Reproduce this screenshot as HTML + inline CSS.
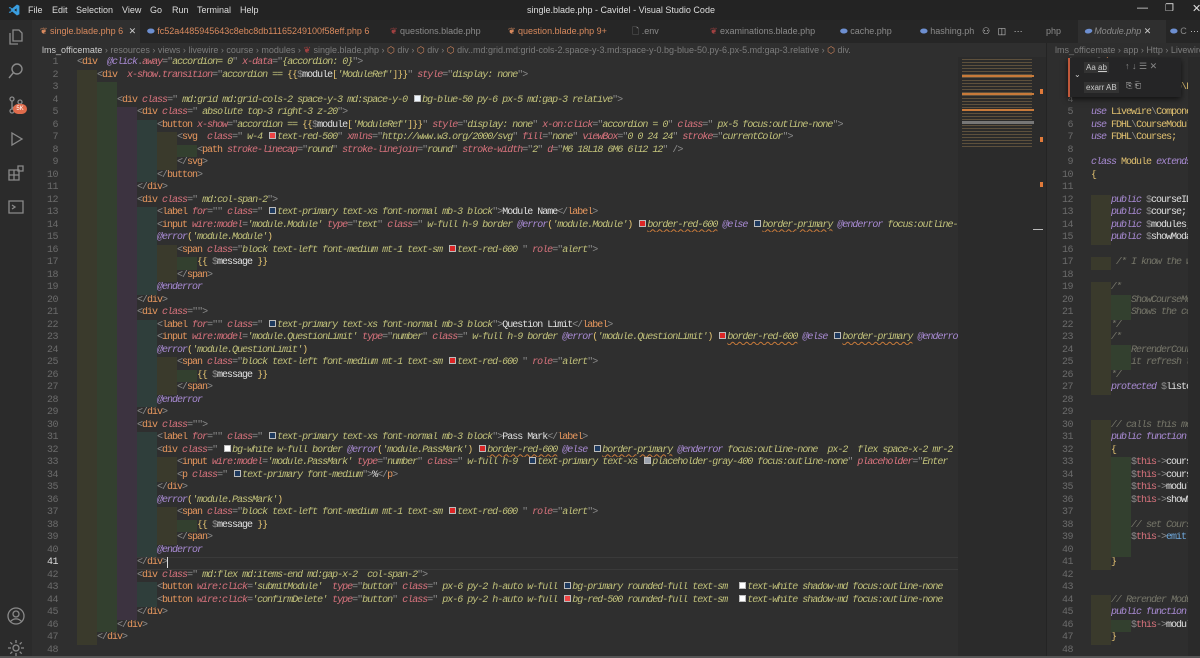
<!DOCTYPE html>
<html><head><meta charset="utf-8"><style>
*{margin:0;padding:0;box-sizing:border-box}
body{width:1200px;height:658px;overflow:hidden;background:#2f2f2f;font-family:"Liberation Sans",sans-serif;position:relative}
.abs{position:absolute}
#title{left:0;top:0;width:1200px;height:20px;background:#232323;color:#ddd;font-size:9px}
#title span{position:absolute;top:5px}
#act{left:0;top:20px;width:32px;height:638px;background:#2b2b2b}
#tabs{left:32px;top:20px;width:1168px;height:23px;background:#262626;font-size:9px;color:#8a8a8a}
.tab{position:absolute;top:0;height:23px;line-height:23px;white-space:nowrap}
.tab.or{color:#d98a5e}
#bc{left:32px;top:43px;width:1014px;height:14px;font-size:9px;color:#7c7c7c;line-height:14px;white-space:nowrap;background:#2f2f2f}
#ed{left:32px;top:57px;width:926px;height:601px;overflow:hidden}
.mono{font-family:"Liberation Mono",monospace;font-size:10px;letter-spacing:-1px;line-height:12.5px}
.ln{position:absolute;width:26px;text-align:right;color:#6b6b6b;letter-spacing:-0.5px}
.code{white-space:normal}
.code>div{height:12.5px;overflow:hidden;white-space:pre}
.code i.g{display:inline-block;width:20px;height:12.5px;vertical-align:top}
.g1{background:#3a3a2c}.g2{background:#33402f}.g3{background:#3c3340}.g4{background:#2f3e3b}.g5{background:#3a3a2c}.g6{background:#33402f}
.k{color:#8c8c8c}.t{color:#e6975e}.a{color:#d8737d;font-style:italic}.s{color:#c2c27b;font-style:italic}.d{color:#a98bd4;font-style:italic}.x{color:#e0e0e0}.c{color:#77776a;font-style:italic}.v{color:#d8737d}.b{color:#e0c070}.u{text-decoration:underline wavy #c87a3a;text-underline-offset:2px}
.q{display:inline-block;width:7px;height:7px;border:1px solid #bbb;margin:0 1px 0 2px;vertical-align:-0px}
#mini{left:958px;top:57px;width:88px;height:601px;background:#2b2b2b}
#right{left:1046px;top:43px;width:154px;height:615px;background:#2e2e2e;border-left:1px solid #242424}
</style></head><body>

<div id="title" class="abs">
<svg class="abs" style="left:8px;top:4px" width="12" height="12" viewBox="0 0 12 12"><path d="M9 1 L11 2 V10 L9 11 L3 6 Z M9 3.5 L5.5 6 L9 8.5 Z M1 4 L2 3.5 L4 5 M1 8 L2 8.5 L4 7" fill="#3a9ee0" stroke="#3a9ee0" stroke-width="0.8"/></svg>
<span style="left:28px">File</span><span style="left:52px">Edit</span><span style="left:76px">Selection</span><span style="left:122px">View</span><span style="left:150px">Go</span><span style="left:172px">Run</span><span style="left:197px">Terminal</span><span style="left:240px">Help</span>
<span style="left:527px">single.blade.php - Cavidel - Visual Studio Code</span>
<span style="left:1137px;top:2px;font-size:11px">—</span><span style="left:1165px;top:3px;font-size:10px">❐</span><span style="left:1192px;top:2px;font-size:11px">✕</span>
</div>

<div id="act" class="abs">
<svg class="abs" style="left:7px;top:8px" width="18" height="18" viewBox="0 0 18 18" fill="none" stroke="#8a8a8a" stroke-width="1.3"><path d="M6 2h6l3 3v8H6z M3 5v11h8"/></svg>
<svg class="abs" style="left:7px;top:42px" width="18" height="18" viewBox="0 0 18 18" fill="none" stroke="#8a8a8a" stroke-width="1.4"><circle cx="10" cy="7" r="5"/><path d="M6.5 10.5L2 16"/></svg>
<svg class="abs" style="left:7px;top:76px" width="18" height="18" viewBox="0 0 18 18" fill="none" stroke="#8a8a8a" stroke-width="1.3"><circle cx="5" cy="3" r="2"/><circle cx="5" cy="15" r="2"/><circle cx="13" cy="6" r="2"/><path d="M5 5v8M13 8c0 3-8 2-8 5"/></svg>
<div class="abs" style="left:13px;top:84px;width:14px;height:10px;border-radius:5px;background:#e06c4c;color:#fff;font-size:6px;text-align:center;line-height:10px">5K</div>
<svg class="abs" style="left:7px;top:110px" width="18" height="18" viewBox="0 0 18 18" fill="none" stroke="#8a8a8a" stroke-width="1.3"><path d="M5 3l10 6-10 6z"/></svg>
<svg class="abs" style="left:7px;top:144px" width="18" height="18" viewBox="0 0 18 18" fill="none" stroke="#8a8a8a" stroke-width="1.3"><path d="M2 6h5v5H2zM7 6h5v5H7zM2 11h5v5H2zM7 11h5v5H7zM11 2h5v5h-5z"/></svg>
<svg class="abs" style="left:7px;top:178px" width="18" height="18" viewBox="0 0 18 18" fill="none" stroke="#8a8a8a" stroke-width="1.3"><path d="M2 3h14v12H2z M5 7l3 2-3 2"/></svg>
<svg class="abs" style="left:6px;top:586px" width="20" height="20" viewBox="0 0 20 20" fill="none" stroke="#8a8a8a" stroke-width="1.3"><circle cx="10" cy="10" r="8"/><circle cx="10" cy="8" r="3"/><path d="M4.5 15.5c3-3.5 8-3.5 11 0"/></svg>
<svg class="abs" style="left:6px;top:618px" width="20" height="20" viewBox="0 0 20 20" fill="none" stroke="#8a8a8a" stroke-width="1.3"><circle cx="10" cy="10" r="3"/><path d="M10 2v3M10 15v3M2 10h3M15 10h3M4.3 4.3l2 2M13.7 13.7l2 2M4.3 15.7l2-2M13.7 6.3l2-2"/></svg>
</div>

<div id="tabs" class="abs">
<div class="tab or" style="left:0;width:108px;background:#2f2f2f;padding-left:8px">❦ single.blade.php 6 <span style="color:#ccc;margin-left:3px">✕</span></div>
<div class="tab or" style="left:115px"><span style="color:#6d8fd0">⬬</span> fc52a4485945643c8ebc8db11165249100f58eff.php 6</div>
<div class="tab" style="left:358px"><span style="color:#a04040">❦</span> questions.blade.php</div>
<div class="tab or" style="left:476px">❦ question.blade.php 9+</div>
<div class="tab" style="left:600px">🗋 .env</div>
<div class="tab" style="left:678px"><span style="color:#a04040">❦</span> examinations.blade.php</div>
<div class="tab" style="left:808px"><span style="color:#6d8fd0">⬬</span> cache.php</div>
<div class="tab" style="left:888px"><span style="color:#6d8fd0">⬬</span> hashing.ph</div>
<div class="tab" style="left:950px;color:#ccc">⚇ &nbsp; ◫ &nbsp; ···</div>
<div class="tab" style="left:1014px">php</div>
<div class="tab" style="left:1046px;width:88px;background:#2f2f2f;padding-left:6px;font-style:italic"><span style="color:#6d8fd0">⬬</span> Module.php <span style="color:#ccc;font-style:normal">✕</span></div>
<div class="tab" style="left:1138px"><span style="color:#6d8fd0">⬬</span> C</div>
<div class="tab" style="left:1158px;color:#ccc">···</div>
</div>

<div id="bc" class="abs"><span style="color:#ccc;margin-left:10px">lms_officemate</span> › resources › views › livewire › course › modules › <span style="color:#a04040">❦</span> single.blade.php › <span style="color:#d98a5e">⬡</span> div › <span style="color:#d98a5e">⬡</span> div › <span style="color:#d98a5e">⬡</span> div..md:grid.md:grid-cols-2.space-y-3.md:space-y-0.bg-blue-50.py-6.px-5.md:gap-3.relative › <span style="color:#d98a5e">⬡</span> div.</div>

<div id="ed" class="abs mono">
<div class="ln" style="left:0;top:0">1<br>2<br>3<br>4<br>5<br>6<br>7<br>8<br>9<br>10<br>11<br>12<br>13<br>14<br>15<br>16<br>17<br>18<br>19<br>20<br>21<br>22<br>23<br>24<br>25<br>26<br>27<br>28<br>29<br>30<br>31<br>32<br>33<br>34<br>35<br>36<br>37<br>38<br>39<br>40<br><span style="color:#ddd">41</span><br>42<br>43<br>44<br>45<br>46<br>47<br>48</div>
<div class="abs" style="left:45px;top:500px;width:900px;height:12.5px;border-top:1px solid #3a3a3a;border-bottom:1px solid #3a3a3a"></div>
<div class="code abs" style="left:45px;top:0;width:900px">
<div><span class="k">&lt;</span><span class="t">div</span>  <span class="d">@click</span><span class="k">.</span><span class="a">away</span><span class="k">="</span><span class="s">accordion= 0</span><span class="k">"</span> <span class="a">x-data</span><span class="k">="</span><span class="s">{accordion: 0}</span><span class="k">"&gt;</span></div>
<div><i class="g g1"></i><span class="k">&lt;</span><span class="t">div</span>  <span class="a">x-show.transition</span><span class="k">="</span><span class="s">accordion == </span><span class="b">{{</span><span class="k">$</span><span class="x">module</span><span class="b">[</span><span class="s">'ModuleRef'</span><span class="b">]}}</span><span class="k">"</span> <span class="a">style</span><span class="k">="</span><span class="s">display: none</span><span class="k">"&gt;</span></div>
<div><i class="g g1"></i><i class="g g2"></i></div>
<div><i class="g g1"></i><i class="g g2"></i><span class="k">&lt;</span><span class="t">div</span> <span class="a">class</span><span class="k">="</span><span class="s"> md:grid md:grid-cols-2 space-y-3 md:space-y-0 <u class="q" style="background:#eff6ff"></u>bg-blue-50 py-6 px-5 md:gap-3 relative</span><span class="k">"&gt;</span></div>
<div><i class="g g1"></i><i class="g g2"></i><i class="g g3"></i><span class="k">&lt;</span><span class="t">div</span> <span class="a">class</span><span class="k">="</span><span class="s"> absolute top-3 right-3 z-20</span><span class="k">"&gt;</span></div>
<div><i class="g g1"></i><i class="g g2"></i><i class="g g3"></i><i class="g g4"></i><span class="k">&lt;</span><span class="t">button</span> <span class="a">x-show</span><span class="k">="</span><span class="s">accordion == </span><span class="b">{{</span><span class="k">$</span><span class="x">module</span><span class="b">[</span><span class="s">'ModuleRef'</span><span class="b">]}}</span><span class="k">"</span> <span class="a">style</span><span class="k">="</span><span class="s">display: none</span><span class="k">"</span> <span class="a">x-on:click</span><span class="k">="</span><span class="s">accordion = 0</span><span class="k">"</span> <span class="a">class</span><span class="k">="</span><span class="s"> px-5 focus:outline-none</span><span class="k">"&gt;</span></div>
<div><i class="g g1"></i><i class="g g2"></i><i class="g g3"></i><i class="g g4"></i><i class="g g5"></i><span class="k">&lt;</span><span class="t">svg</span>  <span class="a">class</span><span class="k">="</span><span class="s"> w-4 <u class="q" style="background:#ef4444"></u>text-red-500</span><span class="k">"</span> <span class="a">xmlns</span><span class="k">="</span><span class="s">http://www.w3.org/2000/svg</span><span class="k">"</span> <span class="a">fill</span><span class="k">="</span><span class="s">none</span><span class="k">"</span> <span class="a">viewBox</span><span class="k">="</span><span class="s">0 0 24 24</span><span class="k">"</span> <span class="a">stroke</span><span class="k">="</span><span class="s">currentColor</span><span class="k">"&gt;</span></div>
<div><i class="g g1"></i><i class="g g2"></i><i class="g g3"></i><i class="g g4"></i><i class="g g5"></i><i class="g g6"></i><span class="k">&lt;</span><span class="t">path</span> <span class="a">stroke-linecap</span><span class="k">="</span><span class="s">round</span><span class="k">"</span> <span class="a">stroke-linejoin</span><span class="k">="</span><span class="s">round</span><span class="k">"</span> <span class="a">stroke-width</span><span class="k">="</span><span class="s">2</span><span class="k">"</span> <span class="a">d</span><span class="k">="</span><span class="s">M6 18L18 6M6 6l12 12</span><span class="k">" /&gt;</span></div>
<div><i class="g g1"></i><i class="g g2"></i><i class="g g3"></i><i class="g g4"></i><i class="g g5"></i><span class="k">&lt;/</span><span class="t">svg</span><span class="k">&gt;</span></div>
<div><i class="g g1"></i><i class="g g2"></i><i class="g g3"></i><i class="g g4"></i><span class="k">&lt;/</span><span class="t">button</span><span class="k">&gt;</span></div>
<div><i class="g g1"></i><i class="g g2"></i><i class="g g3"></i><span class="k">&lt;/</span><span class="t">div</span><span class="k">&gt;</span></div>
<div><i class="g g1"></i><i class="g g2"></i><i class="g g3"></i><span class="k">&lt;</span><span class="t">div</span> <span class="a">class</span><span class="k">="</span><span class="s"> md:col-span-2</span><span class="k">"&gt;</span></div>
<div><i class="g g1"></i><i class="g g2"></i><i class="g g3"></i><i class="g g4"></i><span class="k">&lt;</span><span class="t">label</span> <span class="a">for</span><span class="k">=""</span> <span class="a">class</span><span class="k">="</span><span class="s"> <u class="q" style="background:#1e3a5f"></u>text-primary text-xs font-normal mb-3 block</span><span class="k">"&gt;</span><span class="x">Module Name</span><span class="k">&lt;/</span><span class="t">label</span><span class="k">&gt;</span></div>
<div><i class="g g1"></i><i class="g g2"></i><i class="g g3"></i><i class="g g4"></i><span class="k">&lt;</span><span class="t">input</span> <span class="a">wire:model</span><span class="k">=</span><span class="s">'module.Module'</span> <span class="a">type</span><span class="k">="</span><span class="s">text</span><span class="k">"</span> <span class="a">class</span><span class="k">="</span><span class="s"> w-full h-9 border </span><span class="d">@error</span><span class="b">(</span><span class="s">'module.Module'</span><span class="b">)</span> <u class="q" style="background:#dc2626"></u><span class="s u">border-red-600</span> <span class="d">@else</span> <u class="q" style="background:#1e3a5f"></u><span class="s u">border-primary</span> <span class="d">@enderror</span><span class="s"> focus:outline-none</span></div>
<div><i class="g g1"></i><i class="g g2"></i><i class="g g3"></i><i class="g g4"></i><span class="d">@error</span><span class="b">(</span><span class="s">'module.Module'</span><span class="b">)</span></div>
<div><i class="g g1"></i><i class="g g2"></i><i class="g g3"></i><i class="g g4"></i><i class="g g5"></i><span class="k">&lt;</span><span class="t">span</span> <span class="a">class</span><span class="k">="</span><span class="s">block text-left font-medium mt-1 text-sm <u class="q" style="background:#dc2626"></u>text-red-600 </span><span class="k">"</span> <span class="a">role</span><span class="k">="</span><span class="s">alert</span><span class="k">"&gt;</span></div>
<div><i class="g g1"></i><i class="g g2"></i><i class="g g3"></i><i class="g g4"></i><i class="g g5"></i><i class="g g6"></i><span class="b">{{</span> <span class="k">$</span><span class="x">message</span> <span class="b">}}</span></div>
<div><i class="g g1"></i><i class="g g2"></i><i class="g g3"></i><i class="g g4"></i><i class="g g5"></i><span class="k">&lt;/</span><span class="t">span</span><span class="k">&gt;</span></div>
<div><i class="g g1"></i><i class="g g2"></i><i class="g g3"></i><i class="g g4"></i><span class="d">@enderror</span></div>
<div><i class="g g1"></i><i class="g g2"></i><i class="g g3"></i><span class="k">&lt;/</span><span class="t">div</span><span class="k">&gt;</span></div>
<div><i class="g g1"></i><i class="g g2"></i><i class="g g3"></i><span class="k">&lt;</span><span class="t">div</span> <span class="a">class</span><span class="k">=""&gt;</span></div>
<div><i class="g g1"></i><i class="g g2"></i><i class="g g3"></i><i class="g g4"></i><span class="k">&lt;</span><span class="t">label</span> <span class="a">for</span><span class="k">=""</span> <span class="a">class</span><span class="k">="</span><span class="s"> <u class="q" style="background:#1e3a5f"></u>text-primary text-xs font-normal mb-3 block</span><span class="k">"&gt;</span><span class="x">Question Limit</span><span class="k">&lt;/</span><span class="t">label</span><span class="k">&gt;</span></div>
<div><i class="g g1"></i><i class="g g2"></i><i class="g g3"></i><i class="g g4"></i><span class="k">&lt;</span><span class="t">input</span> <span class="a">wire:model</span><span class="k">=</span><span class="s">'module.QuestionLimit'</span> <span class="a">type</span><span class="k">="</span><span class="s">number</span><span class="k">"</span> <span class="a">class</span><span class="k">="</span><span class="s"> w-full h-9 border </span><span class="d">@error</span><span class="b">(</span><span class="s">'module.QuestionLimit'</span><span class="b">)</span> <u class="q" style="background:#dc2626"></u><span class="s u">border-red-600</span> <span class="d">@else</span> <u class="q" style="background:#1e3a5f"></u><span class="s u">border-primary</span> <span class="d">@enderror</span></div>
<div><i class="g g1"></i><i class="g g2"></i><i class="g g3"></i><i class="g g4"></i><span class="d">@error</span><span class="b">(</span><span class="s">'module.QuestionLimit'</span><span class="b">)</span></div>
<div><i class="g g1"></i><i class="g g2"></i><i class="g g3"></i><i class="g g4"></i><i class="g g5"></i><span class="k">&lt;</span><span class="t">span</span> <span class="a">class</span><span class="k">="</span><span class="s">block text-left font-medium mt-1 text-sm <u class="q" style="background:#dc2626"></u>text-red-600 </span><span class="k">"</span> <span class="a">role</span><span class="k">="</span><span class="s">alert</span><span class="k">"&gt;</span></div>
<div><i class="g g1"></i><i class="g g2"></i><i class="g g3"></i><i class="g g4"></i><i class="g g5"></i><i class="g g6"></i><span class="b">{{</span> <span class="k">$</span><span class="x">message</span> <span class="b">}}</span></div>
<div><i class="g g1"></i><i class="g g2"></i><i class="g g3"></i><i class="g g4"></i><i class="g g5"></i><span class="k">&lt;/</span><span class="t">span</span><span class="k">&gt;</span></div>
<div><i class="g g1"></i><i class="g g2"></i><i class="g g3"></i><i class="g g4"></i><span class="d">@enderror</span></div>
<div><i class="g g1"></i><i class="g g2"></i><i class="g g3"></i><span class="k">&lt;/</span><span class="t">div</span><span class="k">&gt;</span></div>
<div><i class="g g1"></i><i class="g g2"></i><i class="g g3"></i><span class="k">&lt;</span><span class="t">div</span> <span class="a">class</span><span class="k">=""&gt;</span></div>
<div><i class="g g1"></i><i class="g g2"></i><i class="g g3"></i><i class="g g4"></i><span class="k">&lt;</span><span class="t">label</span> <span class="a">for</span><span class="k">=""</span> <span class="a">class</span><span class="k">="</span><span class="s"> <u class="q" style="background:#1e3a5f"></u>text-primary text-xs font-normal mb-3 block</span><span class="k">"&gt;</span><span class="x">Pass Mark</span><span class="k">&lt;/</span><span class="t">label</span><span class="k">&gt;</span></div>
<div><i class="g g1"></i><i class="g g2"></i><i class="g g3"></i><i class="g g4"></i><span class="k">&lt;</span><span class="t">div</span> <span class="a">class</span><span class="k">="</span><span class="s"> <u class="q" style="background:#fff"></u>bg-white w-full border </span><span class="d">@error</span><span class="b">(</span><span class="s">'module.PassMark'</span><span class="b">)</span> <u class="q" style="background:#dc2626"></u><span class="s u">border-red-600</span> <span class="d">@else</span> <u class="q" style="background:#1e3a5f"></u><span class="s u">border-primary</span> <span class="d">@enderror</span><span class="s"> focus:outline-none  px-2  flex space-x-2 mr-2</span></div>
<div><i class="g g1"></i><i class="g g2"></i><i class="g g3"></i><i class="g g4"></i><i class="g g5"></i><span class="k">&lt;</span><span class="t">input</span> <span class="a">wire:model</span><span class="k">=</span><span class="s">'module.PassMark'</span> <span class="a">type</span><span class="k">="</span><span class="s">number</span><span class="k">"</span> <span class="a">class</span><span class="k">="</span><span class="s"> w-full h-9  <u class="q" style="background:#1e3a5f"></u>text-primary text-xs <u class="q" style="background:#9ca3af"></u>placeholder-gray-400 focus:outline-none</span><span class="k">"</span> <span class="a">placeholder</span><span class="k">="</span><span class="s">Enter</span></div>
<div><i class="g g1"></i><i class="g g2"></i><i class="g g3"></i><i class="g g4"></i><i class="g g5"></i><span class="k">&lt;</span><span class="t">p</span> <span class="a">class</span><span class="k">="</span><span class="s"> <u class="q" style="background:#1e3a5f"></u>text-primary font-medium</span><span class="k">"&gt;</span><span class="x">%</span><span class="k">&lt;/</span><span class="t">p</span><span class="k">&gt;</span></div>
<div><i class="g g1"></i><i class="g g2"></i><i class="g g3"></i><i class="g g4"></i><span class="k">&lt;/</span><span class="t">div</span><span class="k">&gt;</span></div>
<div><i class="g g1"></i><i class="g g2"></i><i class="g g3"></i><i class="g g4"></i><span class="d">@error</span><span class="b">(</span><span class="s">'module.PassMark'</span><span class="b">)</span></div>
<div><i class="g g1"></i><i class="g g2"></i><i class="g g3"></i><i class="g g4"></i><i class="g g5"></i><span class="k">&lt;</span><span class="t">span</span> <span class="a">class</span><span class="k">="</span><span class="s">block text-left font-medium mt-1 text-sm <u class="q" style="background:#dc2626"></u>text-red-600 </span><span class="k">"</span> <span class="a">role</span><span class="k">="</span><span class="s">alert</span><span class="k">"&gt;</span></div>
<div><i class="g g1"></i><i class="g g2"></i><i class="g g3"></i><i class="g g4"></i><i class="g g5"></i><i class="g g6"></i><span class="b">{{</span> <span class="k">$</span><span class="x">message</span> <span class="b">}}</span></div>
<div><i class="g g1"></i><i class="g g2"></i><i class="g g3"></i><i class="g g4"></i><i class="g g5"></i><span class="k">&lt;/</span><span class="t">span</span><span class="k">&gt;</span></div>
<div><i class="g g1"></i><i class="g g2"></i><i class="g g3"></i><i class="g g4"></i><span class="d">@enderror</span></div>
<div><i class="g g1"></i><i class="g g2"></i><i class="g g3"></i><span class="k">&lt;/</span><span class="t">div</span><span class="k">&gt;</span><span style="display:inline-block;width:1px;height:11px;background:#ddd;vertical-align:top"></span></div>
<div><i class="g g1"></i><i class="g g2"></i><i class="g g3"></i><span class="k">&lt;</span><span class="t">div</span> <span class="a">class</span><span class="k">="</span><span class="s"> md:flex md:items-end md:gap-x-2  col-span-2</span><span class="k">"&gt;</span></div>
<div><i class="g g1"></i><i class="g g2"></i><i class="g g3"></i><i class="g g4"></i><span class="k">&lt;</span><span class="t">button</span> <span class="a">wire:click</span><span class="k">=</span><span class="s">'submitModule'</span>  <span class="a">type</span><span class="k">="</span><span class="s">button</span><span class="k">"</span> <span class="a">class</span><span class="k">="</span><span class="s"> px-6 py-2 h-auto w-full <u class="q" style="background:#1e3a5f"></u>bg-primary rounded-full text-sm  <u class="q" style="background:#fff"></u>text-white shadow-md focus:outline-none</span></div>
<div><i class="g g1"></i><i class="g g2"></i><i class="g g3"></i><i class="g g4"></i><span class="k">&lt;</span><span class="t">button</span> <span class="a">wire:click</span><span class="k">=</span><span class="s">'confirmDelete'</span> <span class="a">type</span><span class="k">="</span><span class="s">button</span><span class="k">"</span> <span class="a">class</span><span class="k">="</span><span class="s"> px-6 py-2 h-auto w-full <u class="q" style="background:#ef4444"></u>bg-red-500 rounded-full text-sm  <u class="q" style="background:#fff"></u>text-white shadow-md focus:outline-none</span></div>
<div><i class="g g1"></i><i class="g g2"></i><i class="g g3"></i><span class="k">&lt;/</span><span class="t">div</span><span class="k">&gt;</span></div>
<div><i class="g g1"></i><i class="g g2"></i><span class="k">&lt;/</span><span class="t">div</span><span class="k">&gt;</span></div>
<div><i class="g g1"></i><span class="k">&lt;/</span><span class="t">div</span><span class="k">&gt;</span></div>
<div></div>
</div>
</div>

<div id="mini" class="abs">
<div class="abs" style="left:4px;top:2px;width:70px;height:90px;background:repeating-linear-gradient(180deg,#6a5a40 0 1px,transparent 1px 3px);opacity:.8"></div>
<div class="abs" style="left:4px;top:18px;width:72px;height:2px;background:#c87a3a"></div>
<div class="abs" style="left:4px;top:36px;width:72px;height:2px;background:#c87a3a"></div>
<div class="abs" style="left:4px;top:52px;width:72px;height:2px;background:#c87a3a"></div>
<div class="abs" style="left:4px;top:64px;width:72px;height:3px;background:#777"></div>
<div class="abs" style="left:82px;top:32px;width:3px;height:5px;background:#e07a3a"></div>
<div class="abs" style="left:82px;top:80px;width:3px;height:5px;background:#e07a3a"></div>
<div class="abs" style="left:82px;top:125px;width:3px;height:5px;background:#e07a3a"></div>
<div class="abs" style="left:75px;top:172px;width:10px;height:1px;background:#bbb"></div>
</div>

<div id="right" class="abs">
<div class="abs" style="left:0;top:0;width:154px;height:14px;font-size:9px;color:#7c7c7c;line-height:14px;white-space:nowrap;overflow:hidden;padding-left:8px">lms_officemate › app › Http › Livewire</div>
<div class="abs" style="left:141px;top:14px;width:13px;height:601px;background:#2a2a2a"></div>
<div class="abs mono" style="left:0;top:14px;width:141px;height:601px;overflow:hidden">
<div class="ln" style="left:0;top:0">1<br>2<br>3<br>4<br>5<br>6<br>7<br>8<br>9<br>10<br>11<br>12<br>13<br>14<br>15<br>16<br>17<br>18<br>19<br>20<br>21<br>22<br>23<br>24<br>25<br>26<br>27<br>28<br>29<br>30<br>31<br>32<br>33<br>34<br>35<br>36<br>37<br>38<br>39<br>40<br>41<br>42<br>43<br>44<br>45<br>46<br>47<br>48</div>
<div class="code abs" style="left:44px;top:0;width:300px">
<div><span class="k">&lt;?</span><span class="t">php</span></div><div></div>
<div><span class="d">namespace</span> <span class="b">App\Http\Livewire\Course\Modules;</span></div><div></div>
<div><span class="d">use</span> <span class="b">Livewire</span><span class="k">\</span><span class="b">Component;</span></div>
<div><span class="d">use</span> <span class="b">FDHL</span><span class="k">\</span><span class="b">CourseModule;</span></div>
<div><span class="d">use</span> <span class="b">FDHL</span><span class="k">\</span><span class="b">Courses;</span></div><div></div>
<div><span class="d">class</span> <span class="b">Module</span> <span class="d">extends</span> <span class="b">Component</span></div>
<div><span class="b">{</span></div><div></div>
<div><i class="g g1"></i><span class="d">public</span> <span class="k">$</span><span class="x">courseID;</span></div>
<div><i class="g g1"></i><span class="d">public</span> <span class="k">$</span><span class="x">course;</span></div>
<div><i class="g g1"></i><span class="d">public</span> <span class="k">$</span><span class="x">modules;</span></div>
<div><i class="g g1"></i><span class="d">public</span> <span class="k">$</span><span class="x">showModal;</span></div><div></div>
<div><i class="g g1"></i><span class="c"> /* I know the way</span></div><div></div>
<div><i class="g g1"></i><span class="c">/*</span></div>
<div><i class="g g1"></i><i class="g g2"></i><span class="c">ShowCourseModule</span></div>
<div><i class="g g1"></i><i class="g g2"></i><span class="c">Shows the course</span></div>
<div><i class="g g1"></i><span class="c">*/</span></div>
<div><i class="g g1"></i><span class="c">/*</span></div>
<div><i class="g g1"></i><i class="g g2"></i><span class="c">RerenderCourse</span></div>
<div><i class="g g1"></i><i class="g g2"></i><span class="c">it refresh the</span></div>
<div><i class="g g1"></i><span class="c">*/</span></div>
<div><i class="g g1"></i><span class="d">protected</span> <span class="k">$</span><span class="x">listeners</span></div><div></div><div></div>
<div><i class="g g1"></i><span class="c">// calls this method</span></div>
<div><i class="g g1"></i><span class="d">public function</span> <span class="x">mount</span></div>
<div><i class="g g1"></i><span class="b">{</span></div>
<div><i class="g g1"></i><i class="g g2"></i><span class="k">$</span><span class="v">this</span><span class="k">-&gt;</span><span class="x">course</span></div>
<div><i class="g g1"></i><i class="g g2"></i><span class="k">$</span><span class="v">this</span><span class="k">-&gt;</span><span class="x">course</span></div>
<div><i class="g g1"></i><i class="g g2"></i><span class="k">$</span><span class="v">this</span><span class="k">-&gt;</span><span class="x">modules</span></div>
<div><i class="g g1"></i><i class="g g2"></i><span class="k">$</span><span class="v">this</span><span class="k">-&gt;</span><span class="x">showModal</span></div>
<div><i class="g g1"></i><i class="g g2"></i></div>
<div><i class="g g1"></i><i class="g g2"></i><span class="c">// set Course</span></div>
<div><i class="g g1"></i><i class="g g2"></i><span class="k">$</span><span class="v">this</span><span class="k">-&gt;</span><span style="color:#6fa8dc">emit</span></div>
<div><i class="g g1"></i><i class="g g2"></i></div>
<div><i class="g g1"></i><span class="b">}</span></div><div></div><div></div>
<div><i class="g g1"></i><span class="c">// Rerender Module</span></div>
<div><i class="g g1"></i><span class="d">public function</span> <span class="x">render</span></div>
<div><i class="g g1"></i><i class="g g2"></i><span class="k">$</span><span class="v">this</span><span class="k">-&gt;</span><span class="x">modules</span></div>
<div><i class="g g1"></i><span class="b">}</span></div>
</div>
</div>
<div class="abs" style="left:21px;top:15px;width:113px;height:39px;background:#252526;border-left:2px solid #c0583a;box-shadow:0 2px 6px #000a;font-size:8px;color:#ccc">
<span class="abs" style="left:4px;top:12px">⌄</span>
<span class="abs" style="left:14px;top:4px;background:#333;padding:1px 2px">Aa <u>ab</u></span>
<span class="abs" style="left:55px;top:3px;color:#888;font-size:9px">↑ ↓ ☰ ✕</span>
<span class="abs" style="left:14px;top:24px;background:#333;padding:1px 2px">exarr AB</span>
<span class="abs" style="left:56px;top:23px;color:#bbb">⎘ ⎗</span>
</div>
</div>
<div class="abs" style="left:0;top:656px;width:1200px;height:2px;background:#555"></div>
</body></html>
